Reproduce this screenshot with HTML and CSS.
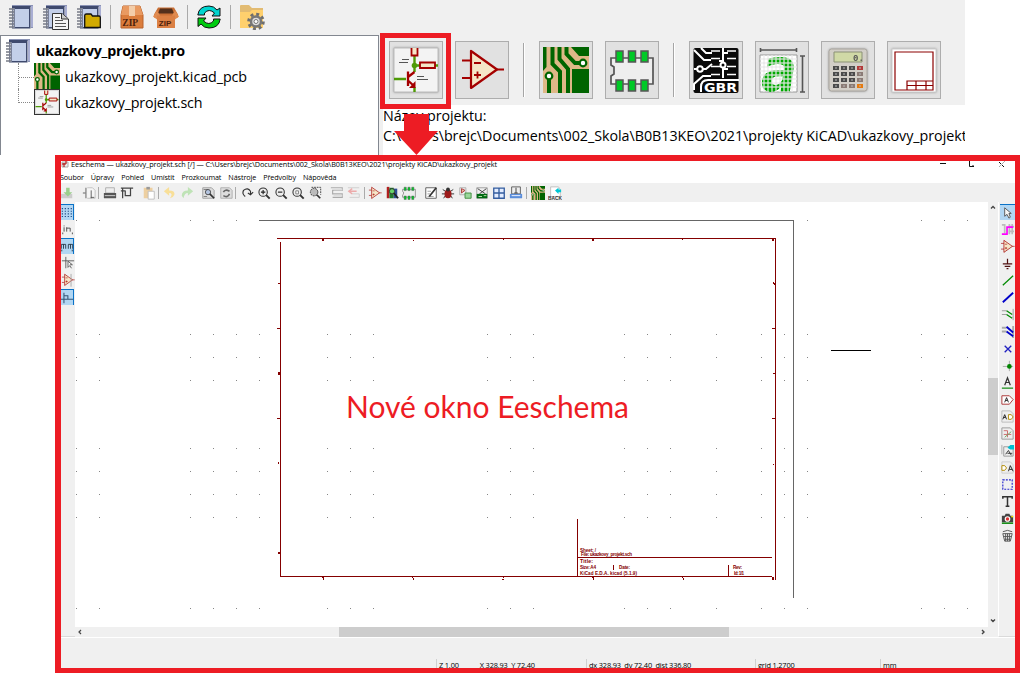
FILE: index.html
```
<!DOCTYPE html>
<html lang="cs">
<head>
<meta charset="utf-8">
<title>KiCad – Eeschema</title>
<link rel="stylesheet" href="styles.css">
</head>
<body>
<svg class="defs" width="0" height="0">
  <defs>
    <symbol id="notebook" viewBox="0 0 24 24">
      <path d="M3 0H24V23H22V2H3z" fill="#8b93b5"/><path d="M22 1h2v21h-2z" fill="#a9aed2"/>
      <path d="M3 1H21.5V23.5H3z" fill="#3f4a6e"/><path d="M6 4H20V22H6z" fill="#c3cfe9"/><path d="M3.5 3h2v20h-2z" fill="#b4b8c6"/>
      <path d="M0 4h5M0 7h5M0 10h5M0 13h5M0 16h5M0 19h5M0 22h5" stroke="#777b86" stroke-width="1.3"/>
    </symbol>
    <symbol id="pcb" viewBox="0 0 46 46">
      <path d="M0 0H46V46H0z" fill="#deb887"/>
      <path d="M0 0H3.500V20L0 24zM28 0H46V9H36zM29 22H46V46H29z" fill="#006400"/>
      <path d="M9.500 0V17L17 24.500V46M16.500 0V12L25 22V46M23.500 0V7L32 16H38M6 32V46" fill="none" stroke="#006400" stroke-width="4"/>
      <circle cx="6" cy="29" r="3.300" fill="#fff" stroke="#006400" stroke-width="2.200"/>
      <circle cx="40" cy="16" r="3.300" fill="#fff" stroke="#006400" stroke-width="2.200"/>
    </symbol>
    <symbol id="sch" viewBox="0 0 46 46">
      <path d="M1 1H45V45H1z" fill="#f3f3f3" stroke="#bbb"/>
      <path d="M21.500 9V25M22 18.500H27M42 18.500H45M1 32H13M21.500 40V45" stroke="#4e9a06" stroke-width="2.400" fill="none"/>
      <circle cx="21.500" cy="18.500" r="2.800" fill="#4e9a06"/>
      <path d="M18.500 1V8.500H24.500V1M27 15.500H42V21H27z" fill="#f5e6c8" stroke="#a40000" stroke-width="1.800"/>
      <path d="M15 24.500V39M21.500 25L15 30M15 33.500L21 39" stroke="#a40000" stroke-width="2.300" fill="none"/><path d="M22.500 34V41H16z" fill="#a40000"/>
      <path d="M9 12.500H16M6 15.500H15M24 29.500H31M24 32.500H35" stroke="#555"/>
    </symbol>
    <symbol id="opamp" viewBox="0 0 46 46">
      <path d="M3 13.500H12M3 31H12M37 22.500H45" stroke="#a40000" stroke-width="2"/>
      <path d="M12 4V41L38 22.500z" fill="#f5e6c8" stroke="#a40000" stroke-width="2.200" stroke-linejoin="round"/>
      <path d="M15 16H22M15 28H22M18.500 24.500V31.500" stroke="#a40000" stroke-width="1.800"/>
    </symbol>
    <symbol id="footprint" viewBox="0 0 46 46">
      <path d="M2 11H44V37H2V29L5 27V20L2 18z" fill="#eee" stroke="#555" stroke-width="1.700"/>
      <path d="M7 4h7v11H7zM19.500 4h7v11h-7zM32 4h7v11h-7zM7 33h7v11H7zM19.500 33h7v11h-7zM32 33h7v11h-7z" fill="#00c926" stroke="#555" stroke-width="1.500"/>
    </symbol>
    <symbol id="lens" viewBox="0 0 16 16"><circle cx="7" cy="7" r="4.800" fill="#eee" stroke="#333" stroke-width="1.200"/><path d="M10.500 10.500l4 4" stroke="#333" stroke-width="2.200"/></symbol>
    <g id="dots"><path d="M76 .5h1M99 .5h1M190 .5h1M213 .5h1M236 .5h1M807 .5h1M921 .5h1M944 .5h1M967 .5h1"/></g>
    <g id="dotrow"><use href="#dots"/><path d="M259 .5h1M327 .5h1M350 .5h1M373 .5h1M487 .5h1M510 .5h1M533 .5h1M624 .5h1M647 .5h1M670 .5h1M716 .5h1M761 .5h1M784 .5h1"/></g>
  </defs>
</svg>

<main class="stage">
  <section class="manager">
    <header class="main-bar">
      <svg class="ic24"><use href="#notebook"/></svg>
      <svg class="ic24 wide g1" viewBox="0 0 26 25"><use href="#notebook" width="24" height="24"/><path d="M9.500 8.500H19L25.500 14V24.500H9.500z" fill="#f4f4f4" stroke="#333"/><path d="M18.500 8.500V14H25" fill="#ccc" stroke="#333"/><path d="M12 12.500h5M12 15.500h8M12 18.500h11M12 21.500h11" stroke="#555"/></svg>
      <svg class="ic24 g2" viewBox="0 0 24 24"><use href="#notebook" width="24" height="24"/><path d="M7.700 10.500Q7.700 9 9.500 9H14L15.500 11H22Q23.300 11 23.300 12.500V22.500H7.700z" fill="#d1aa00" stroke="#111" stroke-width="1.300"/></svg>
      <i class="vsep s1"></i>
      <svg class="ic24 box" viewBox="0 0 24 24"><path d="M3 1H20L23 10V23H1V10z" fill="#db7d3c" stroke="#b9622a"/><path d="M3 1H20L23 10H1z" fill="#e99a61"/><path d="M9 1h6v10H9z" fill="#f3cda9"/><text class="zip" x="2.300" y="20.500">ZIP</text></svg>
      <svg class="ic24 wide g3" viewBox="0 0 26 24"><path d="M5 2H21L25 9V12H22V22H4V12H1V9z" fill="#c96f35"/><path d="M7 3H19L21 8H5z" fill="#54301c"/><path d="M0 11L4 5L7 10L4 14zM26 11L22 5L19 10L22 14z" fill="#e08b50"/><path d="M4 10H22V22.500H4z" fill="#db8044"/><text class="zip small" x="5.800" y="20.500">ZIP</text></svg>
      <i class="vsep s2"></i>
      <svg class="ic24 s2b" viewBox="0 0 24 24"><path d="M.8 10Q2 1 12 1Q17 1 20 5L23 3V11H15L17.500 8Q12 3 7.500 8V10z" fill="#00d5cf" stroke="#111"/><path d="M23.200 14Q22 23 12 23Q7 23 4 19L1 21.500V13H9L6.500 16Q12 21 16.500 16V14z" fill="#00cc10" stroke="#111"/></svg>
      <i class="vsep s3"></i>
      <svg class="ic24 wide s3b" viewBox="0 0 26 25"><path d="M1 1Q1 0 2 0H10L13 3H24V23H1z" fill="#e2bb72"/><path d="M1 7H11L13 5H24V23H1z" fill="#ffd06d"/><circle cx="17" cy="16.500" r="7.300" fill="none" stroke="#6e6e6e" stroke-width="3" stroke-dasharray="2.900 2.830"/><circle cx="17" cy="16.500" r="5" fill="#ddd" stroke="#777" stroke-width="2.500"/><circle cx="17" cy="16.500" r="2" fill="#fff" stroke="#777"/></svg>
    </header>
    <div class="manager-body">
      <nav class="tree">
        <div class="node root"><svg class="ic24"><use href="#notebook"/></svg><b>ukazkovy_projekt.pro</b></div>
        <div class="node child"><i class="twig"></i><svg class="ic26"><use href="#pcb"/></svg><span>ukazkovy_projekt.kicad_pcb</span></div>
        <div class="node child"><i class="twig"></i><svg class="ic26 framed"><use href="#sch"/></svg><span class="sch-name">ukazkovy_projekt.sch</span></div>
      </nav>
      <div class="right">
        <div class="launch">
          <span class="btn"><svg class="ic46 shade"><use href="#sch"/></svg></span>
          <span class="btn"><svg class="ic46"><use href="#opamp"/></svg></span>
          <i class="lsep"></i>
          <span class="btn"><svg class="ic46"><use href="#pcb"/></svg></span>
          <span class="btn"><svg class="ic46"><use href="#footprint"/></svg></span>
          <i class="lsep"></i>
          <span class="btn"><svg class="ic46" viewBox="0 0 46 46"><rect x=".5" y="1" width="45" height="45" rx="2" fill="#0a0a0a"/><path d="M1 3L11 13H18M8 1L13 6H19M1 22H6M8 22H13L19 17M1 43V37L10 29H18M30 1V15M30 21V31M30 6H35M26 14H30M30 22H35" fill="none" stroke="#fff" stroke-width="2"/><path d="M8 45V40Q8 33 15 33H46" fill="none" stroke="#fff" stroke-width="2"/><circle cx="7" cy="22" r="2.800" fill="#0a0a0a" stroke="#fff" stroke-width="2"/><path d="M18 11.500H27M18 19.500H27M34 11.500H43M34 19.500H43M34 27.500H43M18 27.500H27M18 4H27M34 4H43" stroke="#fff" stroke-width="1.500"/><circle cx="30" cy="18" r="2.500" fill="#0a0a0a" stroke="#fff" stroke-width="2"/><text class="gbr" x="11" y="45" textLength="33" lengthAdjust="spacingAndGlyphs">GBR</text></svg></span>
          <span class="btn"><svg class="ic46" viewBox="0 0 46 46"><path d="M1 8H38V45H1z" fill="#fff" stroke="#999"/><text class="bigA" x="2" y="43.500" textLength="36" lengthAdjust="spacingAndGlyphs">a</text><path d="M5 8V45M9 8V45M13 8V45M17 8V45M21 8V45M25 8V45M29 8V45M33 8V45M1 12H38M1 16H38M1 20H38M1 24H38M1 28H38M1 32H38M1 36H38M1 40H38" stroke="#fff" stroke-width=".9"/><path d="M5 8V45M9 8V45M13 8V45M17 8V45M21 8V45M25 8V45M29 8V45M33 8V45M1 12H38M1 16H38M1 20H38M1 24H38M1 28H38M1 32H38M1 36H38M1 40H38" stroke="#ccc" stroke-width=".5"/><path d="M1.500 1V5M37.500 1V5M1 3H38M41 9H46M41 45H46M43.500 9V45" stroke="#555" stroke-width="1.600"/></svg></span>
          <span class="btn"><svg class="ic46 shade" viewBox="0 0 46 46"><rect x="4" y="2" width="38" height="42" rx="2.500" fill="#d2cec7" stroke="#aaa69f"/><path d="M9 5H37V15H9z" fill="#d0d9a6" stroke="#8b9176"/><text class="lcd" x="28" y="14">0.</text><path d="M8 19h6v4H8zM16 19h6v4h-6zM24 19h6v4h-6zM8 25h6v4H8zM16 25h6v4h-6zM24 25h6v4h-6zM8 31h6v4H8zM16 31h6v4h-6zM24 31h6v4h-6zM8 37h6v4H8z" fill="#4b4b4b"/><path d="M16 37h6v4h-6zM24 37h6v4h-6zM32 25h6v4h-6zM32 31h6v4h-6z" fill="#8b7b75"/><path d="M32 19h6v4h-6z" fill="#b33a3a"/><path d="M32 37h6v4h-6z" fill="#e57a10"/><path d="M10 21h2M18 21h2M26 21h2M34 21h2M10 27h2M18 27h2M26 27h2M34 27h2M10 33h2M18 33h2M26 33h2M34 33h2M10 39h2M18 39h2M26 39h2M34 39h2" stroke="#bbb"/></svg></span>
          <span class="btn"><svg class="ic46 shade" viewBox="0 0 46 46"><path d="M1 2H45V45H1z" fill="#fff" stroke="#ccc"/><path d="M4 5H42V43H4zM16 43V34H42M16 38.500H42M25 34V43M35 34V43" fill="none" stroke="#8b0000" stroke-width="1.200"/></svg></span>
        </div>
        <div class="info"><div class="name">Název projektu:</div><div class="path">C:\Users\brejc\Documents\002_Skola\B0B13KEO\2021\projekty KiCAD\ukazkovy_projekt</div></div>
      </div>
    </div>
  </section>

  <section class="editor">
    <header class="titlebar">
      <svg class="appicon" viewBox="0 0 8 7"><path d="M1 1h6v5H1z" fill="#eee" stroke="#aaa"/><path d="M1 3h4M5 0v3M3 2v4" stroke="#a00"/></svg>
      <span class="caption">Eeschema — ukazkovy_projekt.sch [/] — C:\Users\brejc\Documents\002_Skola\B0B13KEO\2021\projekty KiCAD\ukazkovy_projekt</span>
      <svg class="winbtns" viewBox="0 0 70 8"><path d="M3 2.500H9M32.500 0V5.500H37M36 5V4M62 1L67 6" fill="none" stroke="#111"/><path d="M68 0L62 6" stroke="#aaa"/></svg>
    </header>
    <nav class="menu"><span>Soubor</span><span>Úpravy</span><span>Pohled</span><span>Umístit</span><span>Prozkoumat</span><span>Nástroje</span><span>Předvolby</span><span>Nápověda</span></nav>
    <div class="tools">
      <svg viewBox="0 0 16 16"><path d="M1 9H14V14H1z" fill="#ccc"/><path d="M7 2h4v5h3L9 12L4 7h3z" fill="#9bcf8b"/></svg><i></i>
      <svg viewBox="0 0 16 16"><path d="M6 2H12L15 5V14H6" fill="#f6f6f6" stroke="#bbb"/><path d="M4.500 2V14M10.500 5V14M1 8H4M10 13h4" stroke="#555" fill="none"/></svg><i class="on"></i>
      <svg viewBox="0 0 16 16"><path d="M3 2H13V8H3z" fill="#eee" stroke="#aaa"/><path d="M1 8H15V14H1z" fill="#555"/><path d="M2 11H14" stroke="#ddd"/></svg>
      <svg viewBox="0 0 16 16"><path d="M1 2.500H15M3 3V14M12 3V11H6V5M1 5.500H6" fill="none" stroke="#444" stroke-width="1.400"/></svg><i class="on none"></i>
      <svg viewBox="0 0 16 16"><path d="M2 2H12V14H2z" fill="#edcfa0"/><path d="M5 1h4v3H5z" fill="#999"/><path d="M7 6H14V15H7z" fill="#fff" stroke="#bbb"/></svg><i class="on"></i>
      <svg viewBox="0 0 16 16"><path d="M7 1V5Q14 5 13 10Q12 13 8 14Q12 8 7 8V11L1 6z" fill="#f8df98"/></svg>
      <svg viewBox="0 0 16 16"><path d="M9 1V5Q2 5 2 11L4 14Q5 8 9 8V11L15 6z" fill="#bfe3b6"/></svg><i></i>
      <svg viewBox="0 0 16 16"><path d="M2 2H12L15 5V14H2z" fill="#ddd" stroke="#999"/><path d="M3 4H8M3 12H7" stroke="#777"/><circle cx="8" cy="7" r="3" fill="#b4c4df" stroke="#444"/><path d="M10 9L15 14" stroke="#333" stroke-width="2"/></svg>
      <svg viewBox="0 0 16 16"><path d="M2 2H12L15 5V14H2z" fill="#ddd" stroke="#aaa"/><path d="M5 7Q7 3 12 6M12 9Q10 14 5 11" fill="none" stroke="#666" stroke-width="1.800"/></svg><i class="on"></i>
      <svg viewBox="0 0 16 16"><path d="M6 12Q2 9 4 5Q9 1 12 6V9M9 8L12 10L15 7" fill="none" stroke="#333" stroke-width="1.300"/></svg>
      <svg viewBox="0 0 16 16"><use href="#lens"/><path d="M4.500 7H9.500M7 4.500V9.500" stroke="#222" stroke-width="1.300"/></svg>
      <svg viewBox="0 0 16 16"><use href="#lens"/><path d="M4.500 7H9.500" stroke="#222" stroke-width="1.300"/></svg>
      <svg viewBox="0 0 16 16"><use href="#lens"/><path d="M5.500 5.500H8.500V9H5.500z" fill="#fff" stroke="#777"/></svg>
      <svg viewBox="0 0 16 16"><path d="M4 1.500H14.500V10" fill="none" stroke="#333" stroke-dasharray="2 1"/><circle cx="7" cy="7" r="4.300" fill="#bbb" stroke="#333" stroke-dasharray="2 1"/><path d="M10 10l4 4" stroke="#333" stroke-width="2"/></svg><i></i>
      <svg viewBox="0 0 16 16"><path d="M1 2H14V5H3V9H14V13H3" fill="none" stroke="#aaa" stroke-width="1.300"/><path d="M4 3H14V5H4zM4 10H14V12H4z" fill="#ddd"/></svg>
      <svg viewBox="0 0 16 16"><path d="M1 2H14M6 9H14M3 13H14V9" fill="none" stroke="#ccc"/><path d="M6 3L2 6L6 9M2 6H11" fill="none" stroke="#ecaaaa" stroke-width="1.500"/></svg><i class="on"></i>
      <svg viewBox="0 0 46 46"><use href="#opamp"/></svg>
      <svg viewBox="0 0 16 16"><path d="M2 1H5V14H2z" fill="#b02020"/><path d="M5 2H10V14H5z" fill="#207a2a"/><path d="M10 3H14V14H10z" fill="#2c4c92"/><circle cx="8" cy="6" r="3" fill="#67d468" stroke="#333"/><path d="M10 8L15 14" stroke="#222" stroke-width="2"/></svg>
      <svg viewBox="0 0 46 46"><use href="#footprint"/></svg><i></i>
      <svg viewBox="0 0 16 16"><path d="M2 2H14V14H2z" fill="#fff" stroke="#555"/><path d="M4 6H8M4 9H7M4 12H11" stroke="#999"/><path d="M14 2L6 12" stroke="#333" stroke-width="2"/></svg>
      <svg viewBox="0 0 16 16"><path d="M2 4L5 6M14 4L11 6M1 9H15M3 14L5 11M13 14L11 11" stroke="#222"/><ellipse cx="8" cy="9" rx="4" ry="5" fill="#9d1b1b"/><circle cx="8" cy="4" r="2.200" fill="#333"/></svg>
      <svg viewBox="0 0 16 16"><path d="M2 2H9V10H2z" fill="#eee" stroke="#aaa"/><path d="M4 3L8 5L4 8z" fill="#e9b9a5" stroke="#a33"/><path d="M8 8H15V14H8z" fill="#9bd79b" stroke="#3a8a3a"/></svg>
      <svg viewBox="0 0 16 16"><path d="M2 2H14V14H2z" fill="#eee" stroke="#999"/><path d="M3 3L12 9M13 3L5 9" stroke="#333"/><path d="M2 9H14V14H2z" fill="#006b12"/><path d="M4 12H8M10 11H13" stroke="#ceb"/></svg>
      <svg viewBox="0 0 16 16"><path d="M2 2.500H14V14H2zM8 2V14M2 8H14" fill="#e2ecff" stroke="#335c9f" stroke-width="1.500"/></svg>
      <svg viewBox="0 0 16 16"><path d="M3 1H13V9H3z" fill="#eee" stroke="#555"/><path d="M8 2V8M6 8H10" stroke="#333"/><path d="M1 9H15V14H1z" fill="#5b8edb"/><path d="M3 11H13" stroke="#fff"/></svg><i class="on"></i>
      <svg viewBox="0 0 46 46"><use href="#pcb"/></svg>
      <svg viewBox="0 0 16 16"><path d="M3 1H12L14 4V12H3z" fill="#fff" stroke="#bbb"/><path d="M8 5L12 2V4H15V7H12V9z" fill="#00c6d4"/><text class="back" x="0" y="15.500">BACK</text></svg>
    </div>
    <div class="work">
      <aside class="side left">
        <span class="sel"><svg viewBox="0 0 16 16"><path d="M2 3H14M2 6H14M2 9H14M2 12H14" stroke="#234e88" stroke-width="1.400" stroke-dasharray="1.400 2"/></svg></span>
        <span><svg viewBox="0 0 16 16"><path d="M3.500 4V5M3.500 6V11M6.500 11V6M6.500 7H10.500V11M2 12V14M13 12V14" fill="none" stroke="#444"/></svg></span>
        <span class="sel"><svg viewBox="0 0 16 16"><path d="M1.500 10V5H6.500V10M4 5V10M9.500 10V5H14.500V10M12 5V10M2 11V13M14 11V13" fill="none" stroke="#234"/></svg></span>
        <span><svg viewBox="0 0 16 16"><path d="M5.500 1V14M1 5.500H15" stroke="#555"/><path d="M8 6V13L10 11L12 14M8 6L13 10H10" fill="#fff" stroke="#555"/></svg></span>
        <span><svg viewBox="0 0 46 46"><use href="#opamp"/><path d="M33 3V45" stroke="#aaa" stroke-width="3"/></svg></span>
        <span class="sel"><svg viewBox="0 0 16 16"><path d="M4.500 2V14M1 9.500H15M5 5.500H9V9" fill="none" stroke="#355676" stroke-width="1.200"/></svg></span>
      </aside>
      <div class="sheet">
        <svg class="canvas" viewBox="75 202 913 425" shape-rendering="crispEdges">
          <g stroke="#858585" stroke-width="1"><use href="#dots" y="220"/><use href="#dotrow" y="334"/><use href="#dotrow" y="357"/><use href="#dotrow" y="380"/><use href="#dotrow" y="448"/><use href="#dotrow" y="471"/><use href="#dotrow" y="494"/><use href="#dotrow" y="517"/><use href="#dotrow" y="608"/></g>
          <path d="M259 220.500H793.500V598" fill="none" stroke="#666"/>
          <path d="M277 238.500H775.500V580M280.500 242V576.500H772M577.500 519V576M577 557.500H772M613.500 565V570M728.500 565V576M277 328.500H281M277 418.500H281M772 328.500H776M772 418.500H776" fill="none" stroke="#840000"/>
          <path d="M322 239h2v2h-2zM413 240h1v1h-1zM503 239h1v1h-1zM592 239h2v2h-2zM682 239h1v1h-1zM772 239h2v2h-2zM278 283h3v1h-3zM278 372h2v3h-2zM278 462h1v2h-1zM278 552h3v2h-3zM773 282h1v2h-1zM774 283h1v2h-1zM773 373h2v1h-2zM773 464h1v1h-1zM322 577h2v1h-2zM323 578h1v2h-1zM412 577h1v1h-1zM413 578h1v2h-1zM503 577h1v1h-1zM502 579h2v1h-2zM592 577h2v1h-2zM593 578h1v2h-1zM682 577h1v1h-1zM683 578h1v2h-1zM772 577h2v3h-2z" fill="#840000"/>
          <g class="tb"><text x="580" y="551.500" textLength="16">Sheet: /</text><text x="581" y="556.300" textLength="51">File: ukazkovy_projekt.sch</text><text class="ttl" x="580" y="563" textLength="13">Title:</text><text x="580" y="569.300" textLength="16">Size: A4</text><text x="619" y="569.300" textLength="11">Date:</text><text x="580" y="574.500" textLength="57">KiCad E.D.A. kicad (5.1.9)</text><text x="733" y="569.300" textLength="9">Rev:</text><text x="734" y="574.500" textLength="10">Id: 1/1</text></g>
          <path d="M831 350.500H871" stroke="#000"/>
          <text class="note" x="346" y="418" textLength="283" lengthAdjust="spacingAndGlyphs">Nové okno Eeschema</text>
        </svg>
        <div class="hscroll"><svg viewBox="0 0 10 10"><path d="M6 3L4 5L6 7" fill="none" stroke="#444" stroke-width="1.200"/></svg><i class="thumb"></i><svg viewBox="0 0 10 10"><path d="M4 3L6 5L4 7" fill="none" stroke="#444" stroke-width="1.400"/></svg></div>
      </div>
      <div class="vscroll"><svg viewBox="0 0 10 10"><path d="M3 6.500L5 4.500L7 6.500" fill="none" stroke="#444" stroke-width="1.300"/></svg><i class="thumb"></i><svg viewBox="0 0 10 10"><path d="M3 3.500L5 5.500L7 3.500" fill="none" stroke="#444" stroke-width="1.400"/></svg></div>
      <aside class="side rightbar">
        <span class="sel"><svg viewBox="0 0 16 16"><path d="M5 3V12L7.500 10L9.500 14L11 13L9.500 9H12z" fill="#f8f8f8" stroke="#555"/></svg></span>
        <span><svg viewBox="0 0 16 16"><path d="M2 3H5V12M10 2V13M13 2V13M9 5H15M9 10H15" fill="none" stroke="#bbb" stroke-width="1.800"/><path d="M2 13H7.500V5.500H14" fill="none" stroke="#f0f" stroke-width="1.800"/></svg></span>
        <span><svg viewBox="0 0 46 46"><use href="#opamp"/></svg></span>
        <span><svg viewBox="0 0 16 16"><path d="M8 3V8.500M3 8.500H13M5 11H11M7 13.500H9" stroke="#501010" stroke-width="1.300"/></svg></span>
        <span><svg viewBox="0 0 16 16"><path d="M3 13L14 3" stroke="#008a00" stroke-width="1.300"/></svg></span>
        <span><svg viewBox="0 0 16 16"><path d="M3 13L14 3" stroke="#0000c8" stroke-width="2"/></svg></span>
        <span><svg viewBox="0 0 16 16"><path d="M2 4H7M2 8H7M14 2V14" stroke="#999"/><path d="M7 4L13 8M7 8L13 12" stroke="#008a00" stroke-width="1.400"/></svg></span>
        <span><svg viewBox="0 0 16 16"><path d="M2 4H7M2 8H7M14 2V15" stroke="#aaa" stroke-width="2"/><path d="M7 3L14 9M7 8L14 13" stroke="#0000c8" stroke-width="2"/></svg></span>
        <span><svg viewBox="0 0 16 16"><path d="M5 5L12 12M12 5L5 12" stroke="#2020c0" stroke-width="1.400"/></svg></span>
        <span><svg viewBox="0 0 16 16"><path d="M3 9H14M10 3V14" stroke="#aaa"/><circle cx="10" cy="9" r="2.500" fill="#008400"/></svg></span>
        <span><svg viewBox="0 0 16 16"><path d="M5 11L8 3L11 11M6 8H10" fill="none" stroke="#333" stroke-width="1.300"/><path d="M2 14H14" stroke="#008400" stroke-width="1.200"/></svg></span>
        <span><svg viewBox="0 0 16 16"><path d="M2 4H10L14 8L10 13H2z" fill="#fff" stroke="#a33"/><path d="M5 11L7 6L9 11M6 9H8" fill="none" stroke="#222"/></svg></span>
        <span><svg viewBox="0 0 16 16"><path d="M2 2H11L14 5V14H2z" fill="#eee" stroke="#bbb"/><path d="M3 11L5 6L7 11M4 9H6" fill="none" stroke="#222"/><path d="M9 6H12L14 8.500L12 11H9z" fill="#fff" stroke="#b28b00"/></svg></span>
        <span><svg viewBox="0 0 16 16"><path d="M2 2H11L14 5V14H2z" fill="#eee" stroke="#999"/><path d="M4 5H8M4 9H12M8 5V12" stroke="#c66"/><path d="M5 12L12 6" stroke="#6a6"/></svg></span>
        <span><svg viewBox="0 0 16 16"><path d="M4 4H12L14 6V14H4z" fill="#eee" stroke="#999"/><path d="M2 2V12" stroke="#aaa"/><path d="M8 5L11 2H15V7H11z" fill="#00bcd0"/><path d="M6 12L9 8L12 13M8 11H13" fill="none" stroke="#333"/></svg></span>
        <span><svg viewBox="0 0 16 16"><path d="M2 2H11L14 5V14H2z" fill="#eee" stroke="#ccc"/><path d="M2 6H5L7 8.500L5 11H2z" fill="#fff" stroke="#b28b00"/><path d="M9 12L11 6L14 12M10 10H13" fill="none" stroke="#222"/></svg></span>
        <span><svg viewBox="0 0 16 16"><path d="M3 3H13V13H3z" fill="none" stroke="#22c" stroke-width="1.200" stroke-dasharray="2 1.300"/></svg></span>
        <span><svg viewBox="0 0 16 16"><path d="M3 5V3H13V5M8 3V13M6 13H10" fill="none" stroke="#333" stroke-width="1.600"/></svg></span>
        <span><svg viewBox="0 0 16 16"><path d="M2 5H5L6 3H10L11 5H14V12H2z" fill="#444"/><circle cx="8" cy="8.500" r="3" fill="#fff"/><circle cx="8" cy="8.500" r="1.800" fill="#d33"/><path d="M2 13H14" stroke="#008400" stroke-width="1.500"/><path d="M12 6h2" stroke="#fe0" stroke-width="1.500"/></svg></span>
        <span><svg viewBox="0 0 16 16"><path d="M3 4Q8 1 13 4M3 6H13L11 14H5zM4 9H12M5 12H11M6 6V14M8 6V14M10 6V14" fill="none" stroke="#555"/></svg></span>
      </aside>
    </div>
    <footer class="status"><span class="c1"><b>Z 1.00</b><b class="xy">X 328.93&nbsp; Y 72.40</b></span><span class="c2">dx 328.93&nbsp; dy 72.40&nbsp; dist 336.80</span><span class="c3">grid 1.2700</span><span class="c4">mm</span></footer>
  </section>

  <div class="highlight"></div>
  <svg class="arrow" viewBox="0 0 44 41"><path d="M10 0H35V17H44L22.500 41L0 17H10z" fill="#ed1c24"/></svg>
</main>
</body>
</html>
```
FILE: styles.css
```
* { box-sizing: border-box; }
body { margin: 0; background: #fff; color: #000; font-family: "Open Sans", "Noto Sans", sans-serif; overflow: hidden; }
.defs { position: absolute; }
svg { display: block; flex: none; }
.stage { position: relative; width: 1021px; height: 674px; overflow: hidden; background: #fff; }

/* project manager */
.manager { width: 965px; height: 155px; background: #f0f0f0; }
.main-bar { height: 35px; padding: 5px 0 0 9px; display: flex; align-items: flex-start; }
.ic24 { width: 24px; height: 24px; }
.ic24.wide { width: 26px; height: 25px; }
.g1 { margin-left: 10px; }
.g2 { margin-left: 8px; }
.g3 { margin-left: 9px; }
.vsep { width: 1px; height: 24px; background: #aaa; }
.s1 { margin: 0 9px 0 9px; }
.s2 { margin: 0 9px 0 8px; }
.s3 { margin: 0 8px 0 9px; }
.zip { font: bold 9.5px "Liberation Serif", serif; fill: #4d210b; }
.zip.small { font: bold 8px "Liberation Sans", sans-serif; }
.manager-body { display: flex; height: 120px; }
.tree { width: 379px; background: #fff; border: 1px solid #828790; border-bottom: 0; padding-top: 2px; font-size: 14.3px; }
.node { display: flex; align-items: center; white-space: nowrap; height: 26px; }
.root { height: 25px; padding-left: 5px; }
.root b { margin-left: 6px; font-size: 14.3px; letter-spacing: -.28px; }
.child span { margin-left: 5px; letter-spacing: -.08px; }
.child .sch-name { letter-spacing: -.2px; }
.twig { width: 16px; height: 26px; margin-left: 17px; border-left: 1px dotted #888; background: linear-gradient(90deg, #888 50%, transparent 50%) 0 14px / 2px 1px repeat-x; }
.child:last-child .twig { height: 14px; align-self: flex-start; border-bottom: 1px dotted #888; background: none; }
.ic26 { width: 26px; height: 26px; }
.framed { border: 1px solid #333; }
.right { flex: 1; min-width: 0; display: flex; flex-direction: column; padding-left: 4px; }
.launch { height: 70px; display: flex; gap: 12px; padding: 6px 0 0 6px; }
.btn { width: 54px; height: 58px; border: 1px solid #adadad; background: #e1e1e1; display: grid; place-items: center; flex: none; }
.lsep { width: 6px; height: 54px; margin-top: 2px; background: linear-gradient(90deg, transparent 2px, #a5a5a5 2px 3px, #fff 3px 4px, transparent 4px); }
.ic46 { width: 46px; height: 46px; }
.shade { filter: drop-shadow(0 0 1px #999); }
.gbr { font: bold 13px "DejaVu Sans", sans-serif; fill: #fff; }
.bigA { font: italic bold 60px "DejaVu Sans", sans-serif; fill: #00a800; }
.lcd { font: bold 9px "Liberation Mono", monospace; fill: #555; }
.info { flex: 1; background: #fff; overflow: hidden; white-space: nowrap; font-size: 14.3px; line-height: 20px; padding-top: 1px; }
.name { letter-spacing: -.05px; }
.path { letter-spacing: -.03px; }

/* schematic editor window */
.editor { width: 965px; height: 518px; margin-left: 55px; border: 6px solid #ed1c24; border-right-width: 5px; border-bottom-width: 5px; background: #fff; display: flex; flex-direction: column; overflow: hidden; }
.titlebar { height: 9px; display: flex; align-items: flex-start; flex: none; }
.appicon { width: 8px; height: 7px; }
.caption { font-size: 7.3px; letter-spacing: -.095px; line-height: 7px; margin-left: 2px; white-space: nowrap; width: 866px; }
.winbtns { width: 70px; height: 8px; }
.menu { height: 13px; flex: none; display: flex; gap: 7px; font-size: 7.2px; letter-spacing: -.08px; line-height: 14px; margin-left: -1px; }
.tools { height: 19px; flex: none; display: flex; align-items: center; background: #f0f0f0; }
.tools svg { width: 14px; height: 14px; margin: 0 1.55px; }
.tools svg:first-child { margin-left: -.7px; }
.tools i { width: 4.3px; height: 12px; flex: none; }
.tools i.on { background: linear-gradient(90deg, transparent 1.5px, #aaa 1.5px 2.5px, transparent 2.5px); }
.tools i.none { background: none; }
.back { font: bold 5.5px "Liberation Sans", sans-serif; fill: #333; }
.work { height: 435px; flex: none; display: flex; }
.side { background: #f0f0f0; padding-top: 2px; border-bottom: 1px solid #dadada; overflow: hidden; }
.side span { display: flex; justify-content: center; align-items: center; height: 16px; margin-bottom: 1px; }
.side svg { width: 15px; height: 15px; }
.side .sel { background: #b1d6f3; border-top: 1px solid #0a72c7; }
.left { width: 14px; }
.left .sel { border-right: 1px solid #0a72c7; }
.left span { margin-right: 1px; }
.left svg { width: 14px; height: 14px; }
.sheet { width: 913px; background: #fff; }
.canvas { width: 913px; height: 425px; }
.hscroll { height: 10px; background: #f0f0f0; display: flex; }
.hscroll svg, .vscroll svg { width: 10px; height: 10px; }
.hscroll .thumb { width: 390px; margin: 0 249px 0 254px; background: #cdcdcd; }
.vscroll { width: 10px; background: #f0f0f0; display: flex; flex-direction: column; }
.vscroll .thumb { height: 77px; margin: 166px 0 161px; background: #cdcdcd; }
.rightbar { width: 17px; border-left: 1px solid #fff; padding-left: 1px; }
.tb { font: bold 4.6px "Liberation Sans", sans-serif; fill: #840000; }
.ttl { font-size: 5.2px; }
.note { font: 31px Lato, sans-serif; fill: #ed1c24; }
.status { flex: 1; background: #f0f0f0; border-top: 1px solid #fff; padding: 21px 0 0 375px; display: flex; font-size: 7.4px; letter-spacing: -.17px; line-height: 12px; overflow: hidden; white-space: nowrap; }
.status span { border-left: 1px solid #d0d0d0; padding-left: 2px; height: 12px; }
.status b { font-weight: 400; }
.c1 { width: 150px; display: flex; }
.xy { margin-left: 21px; }
.c2 { width: 169px; }
.c3 { width: 125px; }

/* annotations over both windows */
.highlight { position: absolute; left: 380px; top: 33px; width: 71px; height: 76px; border: 5px solid #ed1c24; }
.arrow { position: absolute; left: 394px; top: 114px; width: 44px; height: 41px; }
```
